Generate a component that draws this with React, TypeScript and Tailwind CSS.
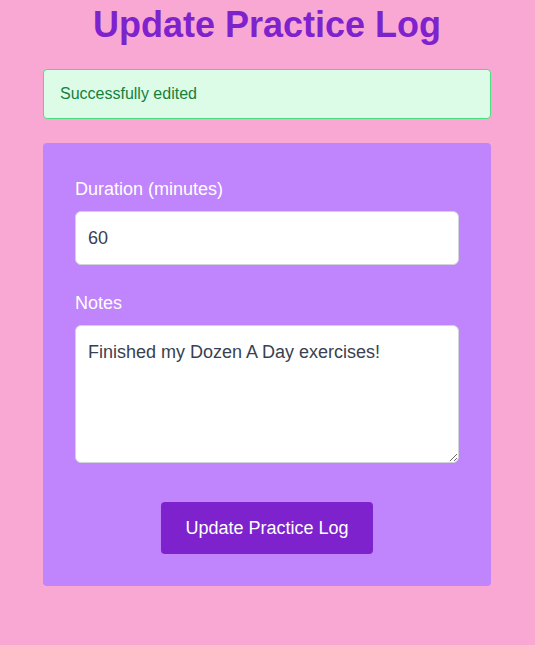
export default function App() {
  return (
    <div
      className="min-h-screen bg-[#f9a8d4] pl-[15px] pr-4"
      style={{ fontFamily: '"Liberation Sans", Arial, sans-serif' }}
    >
      <div className="mx-auto max-w-md pt-[5px]">
        {/* Heading */}
        <h1 className="mb-6 text-center text-4xl font-bold text-[#7e22ce]">
          Update Practice Log
        </h1>

        {/* Alert */}
        <div className="mb-6 rounded border border-[#4ade80] bg-[#dcfce7] px-4 py-3 text-base text-[#15803d]">
          Successfully edited
        </div>

        {/* Form */}
        <form className="rounded bg-[#c084fc] p-8">
          <div className="mb-6">
            <label className="mb-2 block text-lg text-white">Duration (minutes)</label>
            <input
              type="number"
              defaultValue={60}
              className="block w-full rounded-md border border-[#d1d5db] bg-white px-3 py-3 text-lg text-[#374151] outline-none"
            />
          </div>
          <div>
            <label className="mb-2 block text-lg text-white">Notes</label>
            <textarea
              rows={4}
              defaultValue="Finished my Dozen A Day exercises!"
              className="block w-full rounded-md border border-[#d1d5db] bg-white px-3 py-3 text-lg text-[#374151] outline-none"
            />
          </div>
          <div className="mt-[39px] flex justify-center">
            <button
              type="button"
              className="rounded bg-[#7e22ce] px-6 py-3 text-lg text-white"
            >
              Update Practice Log
            </button>
          </div>
        </form>
      </div>
    </div>
  );
}
